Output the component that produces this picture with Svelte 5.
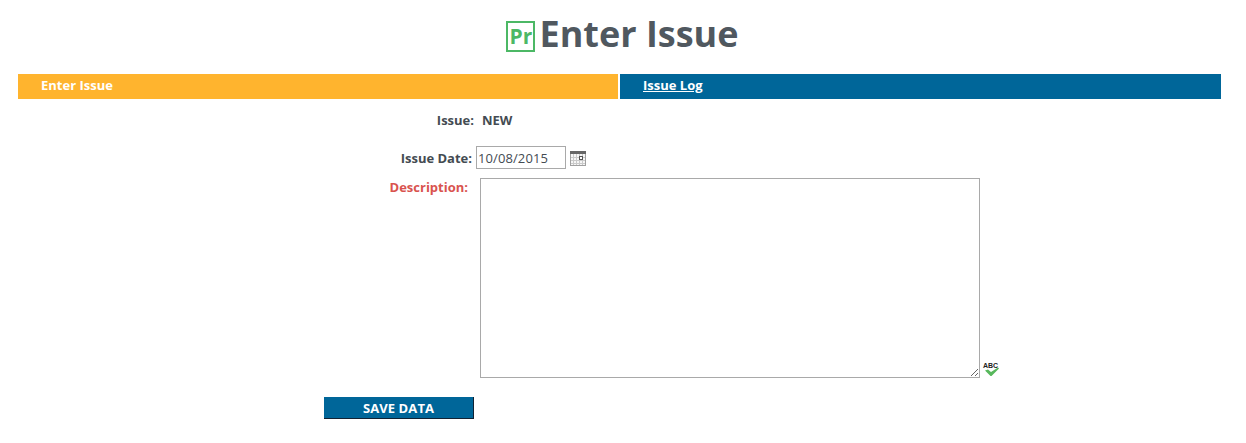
<script>
  let date = $state('10/08/2015');
  let description = $state('');
</script>

<div class="page">
  <header class="title">
    <span class="logo">Pr</span>
    <h1>Enter Issue</h1>
  </header>

  <nav class="tabs">
    <div class="tab active">Enter Issue</div>
    <div class="tab other"><a href="#log">Issue Log</a></div>
  </nav>

  <form class="form" onsubmit={(e) => e.preventDefault()}>
    <div class="row issue">
      <span class="label">Issue:</span>
      <span class="value">NEW</span>
    </div>
    <div class="row date">
      <label class="label" for="date">Issue Date:</label>
      <input id="date" class="dateinput" type="text" bind:value={date} />
      <svg class="cal" width="16" height="15" viewBox="0 0 16 15" aria-hidden="true">
        <rect x="0.5" y="0.5" width="15" height="14" fill="#f6f6f6" stroke="#a0a0a0" />
        <rect x="0" y="0" width="16" height="3" fill="#666" />
        <path d="M3.5 3v11M6.5 3v11M9.5 3v11M12.5 3v11M1 6.5h14M1 9.5h14M1 12.5h14" stroke="#cacaca" fill="none" />
        <rect x="9.5" y="5.5" width="3" height="3" fill="#fff" stroke="#555" />
      </svg>
    </div>
    <div class="row desc">
      <label class="label req" for="desc">Description:</label>
      <textarea id="desc" bind:value={description}></textarea>
      <span class="spell">
        <span class="abc">ABC</span>
        <svg width="16" height="10" viewBox="0 0 16 10" aria-hidden="true">
          <path d="M1 3.5 L4 2.5 L7 5 L14 0.5 L15 1.5 L7.5 9 L6.5 9 Z" fill="#58b85c" />
        </svg>
      </span>
    </div>
    <button class="save" type="submit">SAVE DATA</button>
  </form>
</div>

<style>
  :global(body) {
    margin: 0;
    background: #fff;
  }
  .page {
    width: 1246px;
    height: 443px;
    overflow: hidden;
    font-family: "Open Sans", "Liberation Sans", sans-serif;
    color: #444b52;
    box-sizing: border-box;
  }
  .title {
    display: flex;
    justify-content: center;
    align-items: center;
    height: 74px;
    gap: 4px;
    padding: 0 0 5px 0;
    box-sizing: border-box;
  }
  .logo {
    width: 29px;
    height: 31px;
    box-sizing: border-box;
    border: 2px solid #4cb865;
    color: #4cb865;
    font-weight: 700;
    font-size: 21px;
    display: flex;
    align-items: center;
    justify-content: center;
    margin-top: 3px;
  }
  h1 {
    margin: -2px 1px 0 0;
    font-size: 36px;
    line-height: 40px;
    font-weight: 700;
    color: #50585f;
  }
  .tabs {
    display: flex;
    gap: 2px;
    margin: 0 25px 0 18px;
    height: 25px;
  }
  .tab {
    background: #006699;
    color: #fff;
    font-size: 13px;
    font-weight: 700;
    line-height: 23px;
    padding-left: 23px;
    box-sizing: border-box;
  }
  .tab.active {
    flex: none;
    width: 600px;
    background: #ffb42e;
  }
  .tab.other {
    flex: 1;
  }
  .tab a {
    color: #fff;
  }
  .form {
    display: flex;
    flex-direction: column;
    align-items: flex-start;
    font-size: 13px;
    font-weight: 600;
  }
  .row {
    display: flex;
  }
  .label {
    font-weight: 700;
    text-align: right;
    color: #444b52;
  }
  .issue {
    margin-top: 12px;
    height: 35px;
    margin-left: 324px;
    line-height: 18px;
  }
  .issue .label {
    width: 150px;
  }
  .value {
    margin-left: 8px;
    font-weight: 700;
  }
  .date {
    margin-left: 324px;
    height: 23px;
    align-items: center;
  }
  .date .label {
    width: 148px;
  }
  .dateinput {
    width: 90px;
    height: 23px;
    box-sizing: border-box;
    margin: 0 0 0 4px;
    padding: 1px 1px;
    border: 1px solid #a9a9a9;
    border-radius: 0;
    font: 400 13px "Open Sans", "Liberation Sans", sans-serif;
    letter-spacing: 0.1px;
    color: #444b52;
  }
  .cal {
    margin: 2px 0 0 4px;
    flex: none;
  }
  .desc {
    margin-top: 9px;
    margin-left: 324px;
    align-items: flex-start;
  }
  .desc .label {
    width: 144px;
    line-height: 18px;
  }
  .label.req {
    color: #d9534f;
  }
  textarea {
    width: 500px;
    height: 200px;
    box-sizing: border-box;
    margin: 0 0 0 12px;
    border: 1px solid #a9a9a9;
    padding: 2px;
    display: block;
    background: #fff;
    font: 400 13px "Open Sans", "Liberation Sans", sans-serif;
  }
  .spell {
    align-self: flex-end;
    display: flex;
    flex-direction: column;
    align-items: flex-end;
    width: 18px;
    margin-left: 2px;
    margin-bottom: 1px;
    position: relative;
    height: 14px;
  }
  .abc {
    position: absolute;
    top: -1px;
    left: 1px;
    font: 700 7px/8px "Liberation Sans", sans-serif;
    color: #222;
  }
  .spell svg {
    position: absolute;
    left: 2px;
    top: 4px;
  }
  .save {
    margin: 19px 0 0 324px;
    width: 150px;
    height: 22px;
    box-sizing: border-box;
    border: 0;
    border-right: 1px solid #123;
    border-bottom: 1px solid #123;
    border-radius: 0;
    background: #006699;
    color: #fff;
    font: 700 13px "Open Sans", "Liberation Sans", sans-serif;
    letter-spacing: 0.1px;
    padding: 0;
  }
</style>
